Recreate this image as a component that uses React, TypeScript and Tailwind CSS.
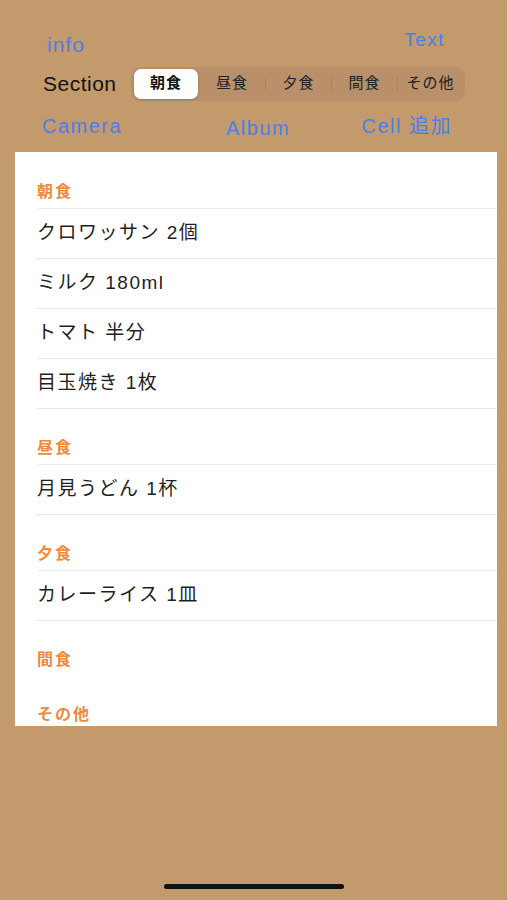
import React from 'react';

const font = { fontFamily: '"Liberation Sans", "Noto Sans CJK JP", sans-serif' };

const segments = ['朝食', '昼食', '夕食', '間食', 'その他'];

const sections: { title: string; items: string[] }[] = [
  { title: '朝食', items: ['クロワッサン 2個', 'ミルク 180ml', 'トマト 半分', '目玉焼き 1枚'] },
  { title: '昼食', items: ['月見うどん 1杯'] },
  { title: '夕食', items: ['カレーライス 1皿'] },
  { title: '間食', items: [] },
  { title: 'その他', items: [] },
];

export default function App() {
  return (
    <div className="w-[507px] h-[900px] bg-[#c39a6b] flex flex-col overflow-hidden" style={font}>
      {/* top buttons */}
      <div className="flex justify-between items-start pt-[28px] pl-[47px] pr-[62px] h-[66px]">
        <span className="text-[21px] leading-[24px] tracking-[1px] text-[#4a7fe6] mt-[5px]">info</span>
        <span className="text-[19px] leading-[24px] tracking-[1.5px] text-[#4a7fe6]">Text</span>
      </div>

      {/* section picker */}
      <div className="flex items-center h-[35px] pl-[43px]">
        <span className="text-[21px] tracking-[0.5px] text-[#111] w-[88px]">Section</span>
        <div className="flex items-center w-[334px] h-[34px] rounded-[9px] bg-[#b9906a] p-[2px]">
          {segments.map((s, i) => (
            <div key={s} className="flex-1 h-full flex items-center">
              {i > 1 && <div className="w-px h-[16px] bg-[#a98562]" />}
              <div
                className={
                  i === 0
                    ? 'flex-1 h-full mx-[1px] flex items-center justify-center bg-white rounded-[7px] shadow-[0_1px_3px_rgba(0,0,0,0.15)] text-[15px] tracking-[1px] font-bold text-[#111]'
                    : 'flex-1 h-full flex items-center justify-center text-[15px] tracking-[1px] text-[#222]'
                }
              >
                {s}
              </div>
            </div>
          ))}
        </div>
      </div>

      {/* actions */}
      <div className="flex items-start h-[51px] pt-[10px] pl-[42px] pr-[55px] text-[20px] tracking-[1.5px] text-[#4a7fe6]">
        <span className="w-[184px]">Camera</span>
        <span className="mt-[2px]">Album</span>
        <span className="ml-auto">Cell 追加</span>
      </div>

      {/* table */}
      <div className="ml-[15px] w-[482px] h-[574px] bg-white overflow-hidden">
        {sections.map((sec, si) => (
          <div key={sec.title}>
            <div
              className={
                (si === 0 ? 'h-[56px] ' : 'h-[55px] ') +
                'flex items-end pb-[4px] pl-[22px] text-[16px] tracking-[2px] font-bold text-[#ee8a3c]'
              }
            >
              {sec.title}
            </div>
            {sec.items.length > 0 && (
              <div className="ml-[22px] border-t border-[#ececec]">
                {sec.items.map((it) => (
                  <div
                    key={it}
                    className="h-[50px] flex items-center border-b border-[#e6e6e6] text-[19px] tracking-[1.5px] text-[#1f1f1f]"
                  >
                    {it}
                  </div>
                ))}
              </div>
            )}
          </div>
        ))}
      </div>

      {/* home indicator */}
      <div className="flex-1 flex items-end justify-center pb-[11px]">
        <div className="w-[180px] h-[5px] rounded-full bg-[#111]" />
      </div>
    </div>
  );
}
